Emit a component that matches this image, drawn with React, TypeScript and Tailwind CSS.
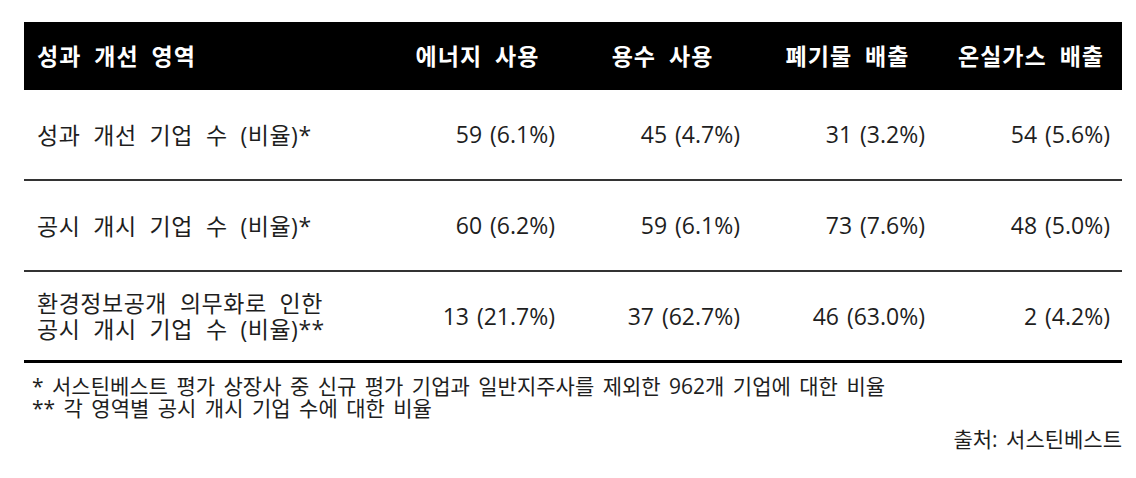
const headers = ["에너지 사용", "용수 사용", "폐기물 배출", "온실가스 배출"];

const rows: { label: string[]; values: string[] }[] = [
  {
    label: ["성과 개선 기업 수 (비율)*"],
    values: ["59 (6.1%)", "45 (4.7%)", "31 (3.2%)", "54 (5.6%)"],
  },
  {
    label: ["공시 개시 기업 수 (비율)*"],
    values: ["60 (6.2%)", "59 (6.1%)", "73 (7.6%)", "48 (5.0%)"],
  },
  {
    label: ["환경정보공개 의무화로 인한", "공시 개시 기업 수 (비율)**"],
    values: ["13 (21.7%)", "37 (62.7%)", "46 (63.0%)", "2 (4.2%)"],
  },
];

const cols = "grid grid-cols-[361px_185px_185px_185px_182px]";

export default function App() {
  return (
    <div
      className="w-[1136px] h-[478px] bg-white pt-[22px] pl-[24px] text-[#1e1e1e]"
      style={{ fontFamily: '"Open Sans", "Noto Sans CJK KR", sans-serif' }}
    >
      <div className="w-[1098px]">
        <div className={`${cols} h-[68px] items-center bg-black text-white font-bold text-[23px] tracking-[1px] [word-spacing:6px]`}>
          <div className="pl-[13px]">성과 개선 영역</div>
          {headers.map((h) => (
            <div key={h} className="text-center">
              {h}
            </div>
          ))}
        </div>
        {rows.map((r, i) => (
          <div
            key={i}
            className={`${cols} items-center text-[23px] h-[91px] ${
              i === rows.length - 1
                ? "border-b-[3px] border-black"
                : "border-b-2 border-[#333]"
            }`}
          >
            <div className="pl-[13px] leading-[26px] tracking-[0.5px] [word-spacing:6.5px]">
              {r.label.map((l) => (
                <div key={l}>{l}</div>
              ))}
            </div>
            {r.values.map((v, j) => (
              <div
                key={j}
                className={`text-right [word-spacing:2px] ${j === 3 ? "pr-[12px]" : "pr-[15px]"}`}
              >
                {v}
              </div>
            ))}
          </div>
        ))}
        <div className="pl-[8px] pt-[12px] text-[21px] leading-[22px] [word-spacing:3px]">
          <div>* 서스틴베스트 평가 상장사 중 신규 평가 기업과 일반지주사를 제외한 962개 기업에 대한 비율</div>
          <div>** 각 영역별 공시 개시 기업 수에 대한 비율</div>
        </div>
        <div className="text-right text-[21px] mt-[5px] [word-spacing:3px]">출처: 서스틴베스트</div>
      </div>
    </div>
  );
}
